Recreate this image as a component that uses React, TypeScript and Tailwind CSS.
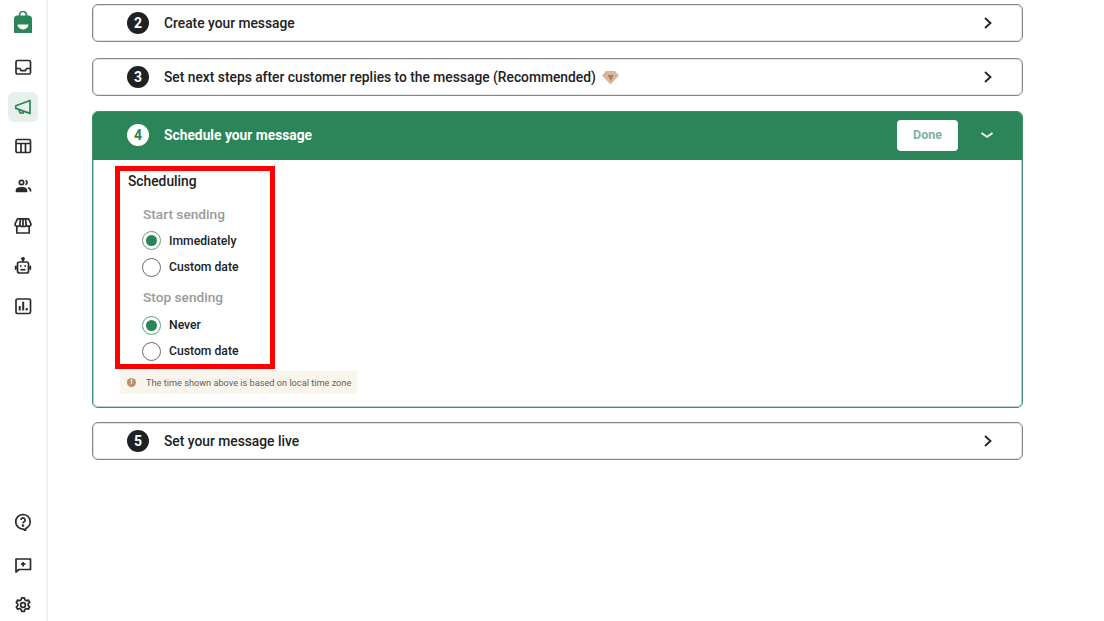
import React from "react";

const font = { fontFamily: "Roboto, sans-serif" };

function Chevron() {
  return (
    <svg width="10" height="14" viewBox="0 0 10 14" fill="none" stroke="#222" strokeWidth="1.8">
      <path d="M2 2l5.5 5L2 12" />
    </svg>
  );
}

function Step({ n, title, extra }: { n: number; title: string; extra?: React.ReactNode }) {
  return (
    <div className="flex h-[38px] items-center rounded-[6px] border border-[#858585] bg-white pl-[34px] pr-[29px] shadow-[inset_0_0_0_1px_#e2e2e2]">
      <div className="flex h-[22px] w-[22px] items-center justify-center rounded-full bg-[#202123] text-[14px] font-bold text-white">
        {n}
      </div>
      <div className="ml-[15px] whitespace-nowrap text-[13.8px] font-medium text-[#202123]">{title}</div>
      {extra}
      <div className="ml-auto flex"><Chevron /></div>
    </div>
  );
}

function Radio({ label, on, tall }: { label: string; on?: boolean; tall?: boolean }) {
  return (
    <div className={`-ml-px flex items-center ${tall ? "h-[27px]" : "h-[26px]"}`}>
      <div className={`flex h-[19px] w-[19px] items-center justify-center rounded-full border ${on ? "border-[#5f9f80]" : "border-[#6b6b6b]"} bg-white`}>
        {on && <div className="h-[11px] w-[11px] rounded-full bg-[#2a8558]" />}
      </div>
      <div className="ml-[8px] pt-px text-[12.2px] font-medium text-[#202123]">{label}</div>
    </div>
  );
}

function Icon({ children, active, className = "" }: { children: React.ReactNode; active?: boolean; className?: string }) {
  return (
    <div className={`flex h-[30px] w-[30px] items-center justify-center rounded-[6px] ${active ? "bg-[#e8f0ec]" : ""} ${className}`}>
      <svg width="18" height="18" viewBox="0 0 18 18" fill="none" stroke={active ? "#2a8558" : "#2b2b2b"} strokeWidth="1.7" strokeLinejoin="round">
        {children}
      </svg>
    </div>
  );
}

export default function App() {
  return (
    <div className="relative flex h-[621px] w-[1104px] overflow-hidden bg-white" style={font}>
      <aside className="flex h-full w-[48px] shrink-0 flex-col items-center border-r-[2px] border-[#edf1ef] pb-px pt-[11px]">
        <svg width="18" height="22" viewBox="0 0 18 22" className="mb-[19px]">
          <path d="M5.500 5V4A3.500 3.500 0 0 1 12.500 4V5" fill="none" stroke="#2a8558" strokeWidth="1.7" />
          <path d="M0 8a3.500 3.500 0 0 1 3.500-3.500h11A3.500 3.500 0 0 1 18 8v13.200a.8.8 0 0 1-.8.8H.8a.8.8 0 0 1-.8-.8z" fill="#2a8558" />
          <path d="M3.500 13.500h11a5.500 5 0 0 1-11 0z" fill="#fff" />
        </svg>
        <div className="flex flex-col items-center gap-[10px]">
          <Icon>
            <rect x="2" y="2.500" width="14.500" height="13.500" rx="1.500" />
            <path d="M2 10.500h4l1 2.200h4.500l1-2.200h4" />
          </Icon>
          <Icon active>
            <path d="M1.800 7.800v2.600l14.200 5V2.500z" />
            <path d="M5.200 11.800l.8 3.200h3.400l-.5-2" />
          </Icon>
          <Icon className="-mt-px">
            <rect x="2" y="2.500" width="14.500" height="13" rx="1.500" />
            <path d="M2 6.500h14.500M7 6.500v9M11.500 6.500v9" />
          </Icon>
          <Icon>
            <circle cx="7.500" cy="5.500" r="2.200" />
            <path d="M11.500 3.500a2.200 2.200 0 0 1 0 4.200" />
            <path d="M2.500 14.500v-1c0-1.600 2.200-2.600 5-2.600s5 1 5 2.600v1z" fill="#2b2b2b" />
            <path d="M14 10.800c1.300.4 2.500 1.300 2.500 2.500v1.200" />
          </Icon>
          <Icon>
            <path d="M2.800 10v6h12.400v-6" />
            <path d="M3.500 1.800h11L17 7a2.200 2.200 0 0 1-2.300 2.300A2.500 2.500 0 0 1 12.300 8.200 2.800 2.800 0 0 1 9 9.300a2.800 2.800 0 0 1-3.300-1.100A2.500 2.500 0 0 1 3.300 9.300 2.200 2.200 0 0 1 1 7z" />
            <path d="M6.500 1.800L5.800 8M9 1.800V9M11.500 1.800l.7 6.200" />
          </Icon>
          <Icon>
            <rect x="3.500" y="5" width="11" height="11" rx="2" />
            <path d="M9 2.500V5" />
            <rect x=".8" y="8.500" width="2" height="4.500" rx="1" fill="#2b2b2b" stroke="none" />
            <rect x="15.200" y="8.500" width="2" height="4.500" rx="1" fill="#2b2b2b" stroke="none" />
            <circle cx="9" cy="1.800" r="1" fill="#2b2b2b" />
            <circle cx="6.800" cy="9" r=".9" fill="#2b2b2b" stroke="none" />
            <circle cx="11.200" cy="9" r=".9" fill="#2b2b2b" stroke="none" />
            <path d="M6.500 12.700h5" />
          </Icon>
          <Icon>
            <rect x="2" y="2" width="14.500" height="14.500" rx="1.500" />
            <path d="M5.700 13.500V9M9.200 13.500V4.800M12.700 13.500v-2.500" strokeWidth="2" />
          </Icon>
        </div>
        <div className="mt-auto flex flex-col items-center">
          <Icon>
            <path d="M9 1.500a7.300 7.300 0 1 0 0 14.600l2.500 1.500v-2a7.300 7.300 0 0 0-2.500-14.100z" />
            <path d="M6.900 6.800A2.100 2.100 0 1 1 9.800 9c-.6.300-.8.700-.8 1.300" />
            <circle cx="9" cy="12.600" r=".5" fill="#2b2b2b" />
          </Icon>
          <Icon className="mt-[13px]">
            <path d="M2 3h14.500v10.500H5l-3 2.500z" />
            <path d="M9.200 6v4.500M7 8.200h4.400" />
          </Icon>
          <Icon className="mt-[10px]">
            <circle cx="9" cy="9" r="2.400" />
            <path d="M7.600 1.800h2.800l.4 2 1.600.9 1.900-.7 1.400 2.400-1.500 1.300v1.800l1.500 1.300-1.400 2.400-1.900-.7-1.600.9-.4 2H7.600l-.4-2-1.600-.9-1.900.7-1.400-2.400 1.500-1.300V8.200L2.300 6.400l1.400-2.400 1.900.7 1.600-.9z" />
          </Icon>
        </div>
      </aside>
      <main className="ml-[44px] flex w-[931px] flex-col pt-[4px]">
        <Step n={2} title="Create your message" />
        <div className="mt-[16px]">
          <Step
            n={3}
            title="Set next steps after customer replies to the message (Recommended)"
            extra={
              <svg width="19" height="15" viewBox="0 0 18 15" className="ml-[5px]">
                <path d="M4.500 1h9L17.500 5.500 9 14.500.5 5.500z" fill="#d9b79c" />
                <path d="M6 5h6l-2.500 6z" fill="#a97f60" />
              </svg>
            }
          />
        </div>
        <section className="mt-[15px] h-[297px] overflow-hidden rounded-[6px] border border-[#3f8f6b] bg-white shadow-[inset_0_0_0_1px_#b7d3c6]">
          <div className="-mx-px -mt-px flex h-[49px] items-center bg-[#2a8558] pb-[1px] pl-[35px] pr-[29px]">
            <div className="flex h-[22px] w-[22px] items-center justify-center rounded-full bg-white text-[14px] font-bold text-[#2a8558]">
              4
            </div>
            <div className="ml-[15px] text-[13.8px] font-bold text-white">Schedule your message</div>
            <div className="ml-auto flex h-[31px] w-[61px] items-center justify-center rounded-[4px] bg-white text-[12.500px] font-bold text-[#7db39a]">
              Done
            </div>
            <svg width="14" height="10" viewBox="0 0 14 10" fill="none" stroke="#fff" strokeWidth="1.8" className="ml-[22px]">
              <path d="M1.500 3l5.500 4 5.500-4" />
            </svg>
          </div>
          <div className="pl-[35px] pt-[11px]">
            <div className="text-[13.8px] font-medium leading-[20px] text-[#202123]">Scheduling</div>
            <div className="pl-[15px] pt-[13px]">
              <div className="text-[13.700px] font-medium leading-[20px] text-[#9a9a9a]">Start sending</div>
              <div className="mt-[3px]">
                <Radio label="Immediately" on tall />
                <Radio label="Custom date" />
              </div>
              <div className="mt-[7px] text-[13.700px] font-medium leading-[20px] text-[#9a9a9a]">Stop sending</div>
              <div className="mt-[5px]">
                <Radio label="Never" on />
                <Radio label="Custom date" />
              </div>
            </div>
          </div>
          <div className="ml-[27px] mt-[7px] flex h-[23px] w-[237px] items-center bg-[#faf5ec] pl-[7px] text-[9.200px] text-[#5f5f5f]">
            <div className="flex h-[9px] w-[9px] items-center justify-center rounded-full bg-[#b98f6d] text-[7px] font-bold leading-none text-white">!</div>
            <div className="ml-[10px] whitespace-nowrap">The time shown above is based on local time zone</div>
          </div>
        </section>
        <div className="mt-[14px]">
          <Step n={5} title="Set your message live" />
        </div>
      </main>
      <div className="absolute left-[115px] top-[166px] h-[203px] w-[160px] border-[5px] border-[#ff0000]" />
    </div>
  );
}
